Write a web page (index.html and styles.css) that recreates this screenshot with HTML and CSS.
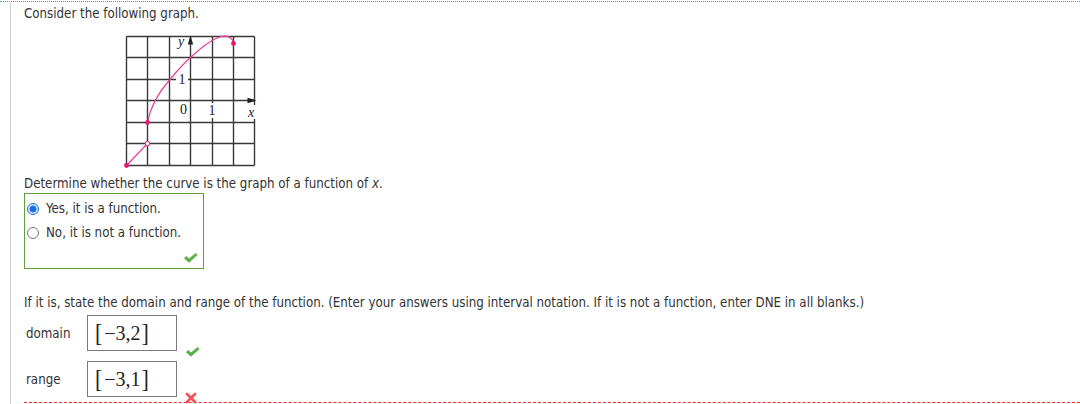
FILE: index.html
```html
<!DOCTYPE html>
<html>
<head>
<meta charset="utf-8">
<link rel="stylesheet" href="styles.css">
</head>
<body>
<div class="page">
  <div class="content">
    <p class="line">Consider the following graph.</p>
    <svg class="graph" width="140" height="146" viewBox="120 30 140 146" xmlns="http://www.w3.org/2000/svg">
      <g stroke="#383838" stroke-width="1.4" fill="none">
        <line x1="126.5" y1="36.5" x2="126.5" y2="165.5"/>
        <line x1="147.5" y1="36.5" x2="147.5" y2="165.5"/>
        <line x1="169.5" y1="36.5" x2="169.5" y2="165.5"/>
        <line x1="190.5" y1="36.5" x2="190.5" y2="165.5"/>
        <line x1="212.5" y1="36.5" x2="212.5" y2="165.5"/>
        <line x1="233.5" y1="36.5" x2="233.5" y2="165.5"/>
        <line x1="254.5" y1="36.5" x2="254.5" y2="165.5"/>
        <line x1="126.5" y1="36.5" x2="254.5" y2="36.5"/>
        <line x1="126.5" y1="57.5" x2="254.5" y2="57.5"/>
        <line x1="126.5" y1="79.5" x2="254.5" y2="79.5"/>
        <line x1="126.5" y1="100.5" x2="254.5" y2="100.5"/>
        <line x1="126.5" y1="122.5" x2="254.5" y2="122.5"/>
        <line x1="126.5" y1="143.5" x2="254.5" y2="143.5"/>
        <line x1="126.5" y1="165.5" x2="254.5" y2="165.5"/>
      </g>
      <g fill="#fff">
        <rect x="176" y="73" width="12" height="13"/>
        <rect x="207" y="103" width="10" height="15"/>
        <rect x="246" y="105" width="11" height="14"/>
      </g>
      <g fill="#222">
        <polygon points="190.5,35.5 187.8,44.5 193.2,44.5"/>
        <polygon points="256.5,100.5 247.5,97.8 247.5,103.2"/>
      </g>
      <g font-family="'Liberation Serif', 'DejaVu Serif', serif" font-size="14" fill="#222">
        <text x="178" y="46" font-style="italic">y</text>
        <text x="178.5" y="84">1</text>
        <text x="180" y="114">0</text>
        <text x="208.5" y="115">1</text>
        <text x="248" y="117" font-style="italic">x</text>
      </g>
      <g stroke="#ea3f8e" stroke-width="1.2" fill="none">
        <line x1="126.5" y1="165.5" x2="147.5" y2="143.5"/>
        <path d="M147.5,122.5 C150,108 159,92 169.5,80 C177,71 183,64 190.5,57.5 C200,49 210,40 221,36.5 C228,35 233,38 233.5,43.5"/>
      </g>
      <g fill="#e2157a">
        <circle cx="126.5" cy="165.5" r="2.4"/>
        <circle cx="147.5" cy="122.5" r="2.4"/>
        <circle cx="233.5" cy="43.5" r="2.4"/>
      </g>
      <circle cx="147.5" cy="143.5" r="2.2" fill="#fff" stroke="#e2157a" stroke-width="1"/>
    </svg>
    <p class="line">Determine whether the curve is the graph of a function of <i class="var">x</i>.</p>
    <div class="choices">
      <div class="choice"><span class="radio on"></span><span>Yes, it is a function.</span></div>
      <div class="choice"><span class="radio"></span><span>No, it is not a function.</span></div>
      <div class="choice-mark">
        <svg class="check" width="14" height="10" viewBox="0 0 14 10"><polygon points="0,5.2 2.3,3 5,5.6 11.6,0 13.6,2.1 5,9.8" fill="#5fb04c"/></svg>
      </div>
    </div>
    <p class="line instructions">If it is, state the domain and range of the function. (Enter your answers using interval notation. If it is not a function, enter DNE in all blanks.)</p>
    <div class="answer">
      <span class="label">domain</span>
      <span class="box"><span class="br">[</span><span class="num">−3,2</span><span class="br">]</span></span>
      <svg class="check mark-ok" width="14" height="10" viewBox="0 0 14 10"><polygon points="0,5.2 2.3,3 5,5.6 11.6,0 13.6,2.1 5,9.8" fill="#5fb04c"/></svg>
    </div>
    <div class="answer">
      <span class="label">range</span>
      <span class="box"><span class="br">[</span><span class="num">−3,1</span><span class="br">]</span></span>
      <svg class="cross" width="12" height="12" viewBox="0 0 12 12"><g stroke="#f05555" stroke-width="2.8" stroke-linecap="round"><line x1="2" y1="2" x2="10" y2="10"/><line x1="10" y1="2" x2="2" y2="10"/></g></svg>
    </div>
    <div class="next"></div>
  </div>
</div>
</body>
</html>
```
FILE: styles.css
```css
html, body {
  margin: 0;
  padding: 0;
  background: #fff;
}
body {
  font-family: "DejaVu Sans Condensed", "DejaVu Sans", Verdana, sans-serif;
  font-size: 13.2px;
  color: #333;
  width: 1080px;
  height: 404px;
  overflow: hidden;
}
.page {
  margin-top: 1px;
  border-top: 1px dotted #3a9ef0;
}
.content {
  box-sizing: border-box;
  margin-left: 10px;
  margin-top: 1px;
  border-left: 1px solid #cfcfcf;
  padding-left: 13px;
  padding-top: 3px;
  height: 401px;
}
.line {
  margin: 0;
  line-height: 16px;
  white-space: nowrap;
}
.var {
  font-style: italic;
}
.graph {
  display: block;
  margin: 8px 0 0 96px;
}
.choices {
  margin-top: 1px;
  width: 178px;
  border: 1px solid #62a03e;
  padding: 3px 0 5px 0;
}
.choice {
  height: 24px;
  display: flex;
  align-items: center;
  line-height: 16px;
}
.radio {
  box-sizing: border-box;
  width: 12px;
  height: 12px;
  border-radius: 50%;
  border: 1px solid #777;
  background: #fff;
  margin: 0 7px 0 2px;
  flex: none;
}
.radio.on {
  border: 1.5px solid #1a6fe6;
  background: radial-gradient(circle, #1a6fe6 0 3.2px, #dbe8fb 3.8px);
}
.choice-mark {
  display: flex;
  justify-content: flex-end;
  padding-right: 5px;
  margin-top: 8px;
  height: 10px;
}
.check, .cross {
  display: block;
}
.instructions {
  margin-top: 26px;
}
.answer {
  display: flex;
  align-items: flex-start;
  height: 36px;
}
.instructions + .answer {
  margin-top: 4px;
}
.answer + .answer {
  margin-top: 10px;
}
.label {
  width: 63px;
  line-height: 16px;
  margin-top: 11px;
  padding-left: 2px;
  box-sizing: border-box;
}
.box {
  box-sizing: border-box;
  width: 90px;
  height: 36px;
  border: 1px solid #7a7a7a;
  padding-left: 7px;
  display: flex;
  align-items: center;
  font-family: "Liberation Serif", "DejaVu Serif", serif;
  color: #222;
}
.br {
  display: inline-block;
  font-size: 22px;
  line-height: 24px;
  transform: scaleY(1.15);
}
.num {
  font-size: 20px;
  line-height: 24px;
  padding: 0 1px 0 2px;
}
.mark-ok {
  margin: 32px 0 0 9px;
}
.cross {
  margin: 31px 0 0 8px;
}
.next {
  margin-top: 5px;
  border-top: 1px dashed #ff2a2a;
}
```
